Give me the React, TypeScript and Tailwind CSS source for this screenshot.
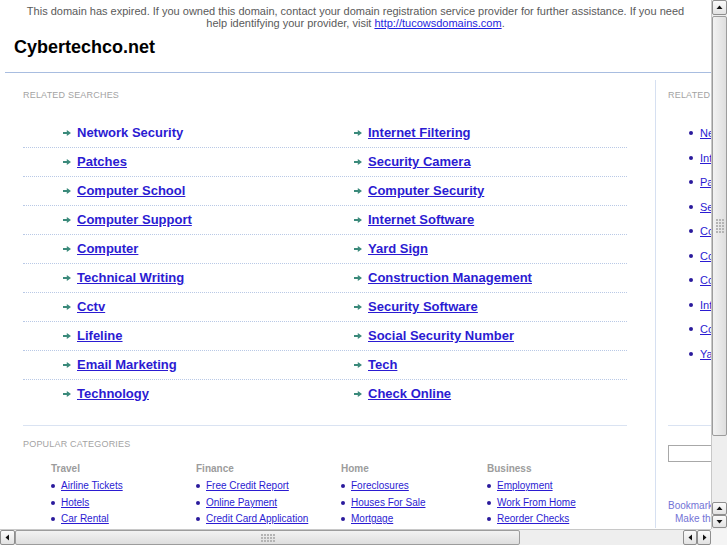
import React from "react";

const LEFT = [
  "Network Security",
  "Patches",
  "Computer School",
  "Computer Support",
  "Computer",
  "Technical Writing",
  "Cctv",
  "Lifeline",
  "Email Marketing",
  "Technology",
];
const RIGHT = [
  "Internet Filtering",
  "Security Camera",
  "Computer Security",
  "Internet Software",
  "Yard Sign",
  "Construction Management",
  "Security Software",
  "Social Security Number",
  "Tech",
  "Check Online",
];
const SIDE = [
  "Network Security",
  "Internet Filtering",
  "Patches",
  "Security Camera",
  "Computer School",
  "Computer Security",
  "Computer Support",
  "Internet Software",
  "Computer",
  "Yard Sign",
];
const CATS: { title: string; items: string[] }[] = [
  { title: "Travel", items: ["Airline Tickets", "Hotels", "Car Rental"] },
  { title: "Finance", items: ["Free Credit Report", "Online Payment", "Credit Card Application"] },
  { title: "Home", items: ["Foreclosures", "Houses For Sale", "Mortgage"] },
  { title: "Business", items: ["Employment", "Work From Home", "Reorder Checks"] },
];

function Arrow() {
  return (
    <svg width="8" height="6" viewBox="0 0 8 6" className="mt-[1px] shrink-0">
      <path d="M0 2H3.8V0L8 3L3.8 6V4H0Z" fill="#3b8a7b" />
    </svg>
  );
}

function Tri({ dir }: { dir: "up" | "down" | "left" | "right" }) {
  const d =
    dir === "up"
      ? "M0.5 5L3.5 1.5L6.5 5Z"
      : dir === "down"
      ? "M0.5 2L3.5 5.5L6.5 2Z"
      : dir === "left"
      ? "M5 0.5L1.5 3.5L5 6.5Z"
      : "M2 0.5L5.5 3.5L2 6.5Z";
  return (
    <svg width="7" height="7" viewBox="0 0 7 7">
      <path d={d} fill="#111" />
    </svg>
  );
}

function Btn({ dir, className }: { dir: "up" | "down" | "left" | "right"; className: string }) {
  return (
    <div
      className={
        "flex items-center justify-center rounded-[2px] border border-[#8e8e8e] bg-gradient-to-b from-[#fbfbfb] to-[#e2e2e2] " +
        className
      }
    >
      <Tri dir={dir} />
    </div>
  );
}

function Grip({ vertical }: { vertical: boolean }) {
  const rows = vertical ? 5 : 3;
  const cols = vertical ? 3 : 5;
  return (
    <div className="flex flex-col gap-[1px]">
      {Array.from({ length: rows }).map((_, r) => (
        <div key={r} className="flex gap-[1px]">
          {Array.from({ length: cols }).map((_, c) => (
            <span key={c} className="block h-[2px] w-[2px] bg-[#b4b4b4]" />
          ))}
        </div>
      ))}
    </div>
  );
}

export default function App() {
  return (
    <div
      className="relative h-[545px] w-[727px] overflow-hidden bg-white"
      style={{ fontFamily: '"Liberation Sans", Arial, Helvetica, sans-serif' }}
    >
      <div className="flex h-[529px]">
        {/* Page viewport */}
        <div className="h-[529px] w-[711px] overflow-hidden">
          <div className="w-[900px]">
            {/* Banner */}
            <div className="w-[711px] px-[16px] pt-[5px] text-center text-[11px] leading-[12px] text-[#5a5a5a]">
              This domain has expired. If you owned this domain, contact your domain registration service provider for
              further assistance. If you need help identifying your provider, visit{" "}
              <a className="text-[#1f1fe0] underline">http://tucowsdomains.com</a>.
            </div>

            {/* Header */}
            <div className="ml-[5px] border-b border-[#a8bde0] pb-[14px] pl-[9px] pt-[8px] text-[18px] font-bold leading-[21px] text-black">
              Cybertechco.net
            </div>

            {/* Main */}
            <div className="flex">
              <div className="ml-[5px] mt-[7px] w-[651px] shrink-0 border-r border-[#d6e0f1] pl-[18px]">
                <div className="pt-[10px] text-[9px] leading-[11px] tracking-[0.2px] text-[#a3a3a3]">RELATED SEARCHES</div>

                <div className="mt-[18px] w-[604px]">
                  {LEFT.map((l, i) => (
                    <div
                      key={l}
                      className={
                        "grid grid-cols-[302px_302px] pb-[7px] pt-[6px] " +
                        (i < LEFT.length - 1 ? "border-b border-dotted border-[#b9c9e6]" : "")
                      }
                    >
                      <div className="flex items-center gap-[6px] pl-[40px]">
                        <Arrow />
                        <a
                          className={
                            "text-[13px] font-bold leading-[15px] text-[#2b1bd2] " + (i === 0 ? "" : "underline")
                          }
                        >
                          {l}
                        </a>
                      </div>
                      <div className="flex items-center gap-[6px] pl-[29px]">
                        <Arrow />
                        <a className="text-[13px] font-bold leading-[15px] text-[#2b1bd2] underline">{RIGHT[i]}</a>
                      </div>
                    </div>
                  ))}
                </div>

                <div className="mt-[17px] w-[604px] border-t border-[#dae3f2] pt-[13px]">
                  <div className="text-[9px] leading-[11px] tracking-[0.2px] text-[#a3a3a3]">POPULAR CATEGORIES</div>
                  <div className="mt-[13px] grid grid-cols-[145px_145px_146px_146px] pl-[28px]">
                    {CATS.map((c) => (
                      <div key={c.title}>
                        <div className="text-[10px] font-bold leading-[12px] text-[#9c9c9c]">{c.title}</div>
                        <div className="mt-[3px]">
                          {c.items.map((it) => (
                            <div key={it} className="flex items-center gap-[6px] text-[10px] leading-[16.5px]">
                              <span className="block h-[4px] w-[4px] shrink-0 rounded-full bg-[#2a1a9c]" />
                              <a className="text-[#2b1bd2] underline">{it}</a>
                            </div>
                          ))}
                        </div>
                      </div>
                    ))}
                  </div>
                </div>
              </div>

              {/* Sidebar */}
              <div className="mt-[7px] w-[200px] pl-[12px]">
                <div className="pt-[10px] text-[9px] leading-[11px] tracking-[0.2px] text-[#a3a3a3]">RELATED SEARCHES</div>
                <div className="mt-[20px]">
                  {SIDE.map((s, i) => (
                    <div key={i} className="flex items-center gap-[7px] pl-[21px] text-[11px] leading-[24.5px]">
                      <span className="block h-[4px] w-[4px] shrink-0 rounded-full bg-[#2a1a9c]" />
                      <a className="text-[#2b1bd2] underline">{s}</a>
                    </div>
                  ))}
                </div>
                <div className="mt-[59px] w-[150px] border-t border-[#dae3f2]" />
                <div className="mt-[19px] h-[17px] w-[120px] border border-[#a8a8a8] bg-white" />
                <div className="mt-[37px] text-[10px] leading-[13px] text-[#7373d6]">Bookmark this page</div>
                <div className="pl-[7px] text-[10px] leading-[13px] text-[#7373d6]">Make this your homepage</div>
              </div>
            </div>
          </div>
        </div>

        {/* Vertical scrollbar */}
        <div className="flex h-[529px] w-[16px] flex-col border-l border-[#c8c8c8] bg-[#eeeeee]">
          <Btn dir="up" className="h-[15px] w-[15px]" />
          <div className="mt-[1px] flex h-[420px] w-[15px] items-center justify-center rounded-[2px] border border-[#9c9c9c] bg-gradient-to-r from-[#f2f2f2] to-[#dedede]">
            <Grip vertical />
          </div>
          <div className="flex-1" />
          <Btn dir="up" className="h-[13px] w-[15px]" />
          <Btn dir="down" className="mb-[1px] h-[13px] w-[15px]" />
        </div>
      </div>

      {/* Horizontal scrollbar */}
      <div className="flex h-[16px]">
        <div className="flex h-[16px] w-[711px] border-t border-[#c8c8c8] bg-[#eeeeee]">
          <Btn dir="left" className="h-[15px] w-[15px]" />
          <div className="flex h-[15px] w-[505px] items-center justify-end rounded-[2px] border border-[#9c9c9c] bg-gradient-to-b from-[#f2f2f2] to-[#dedede] pr-[244px]">
            <Grip vertical={false} />
          </div>
          <div className="flex-1" />
          <Btn dir="left" className="h-[15px] w-[14px]" />
          <Btn dir="right" className="h-[15px] w-[14px]" />
        </div>
        <div className="h-[16px] w-[16px] bg-[#f4f4f4]" />
      </div>
    </div>
  );
}
